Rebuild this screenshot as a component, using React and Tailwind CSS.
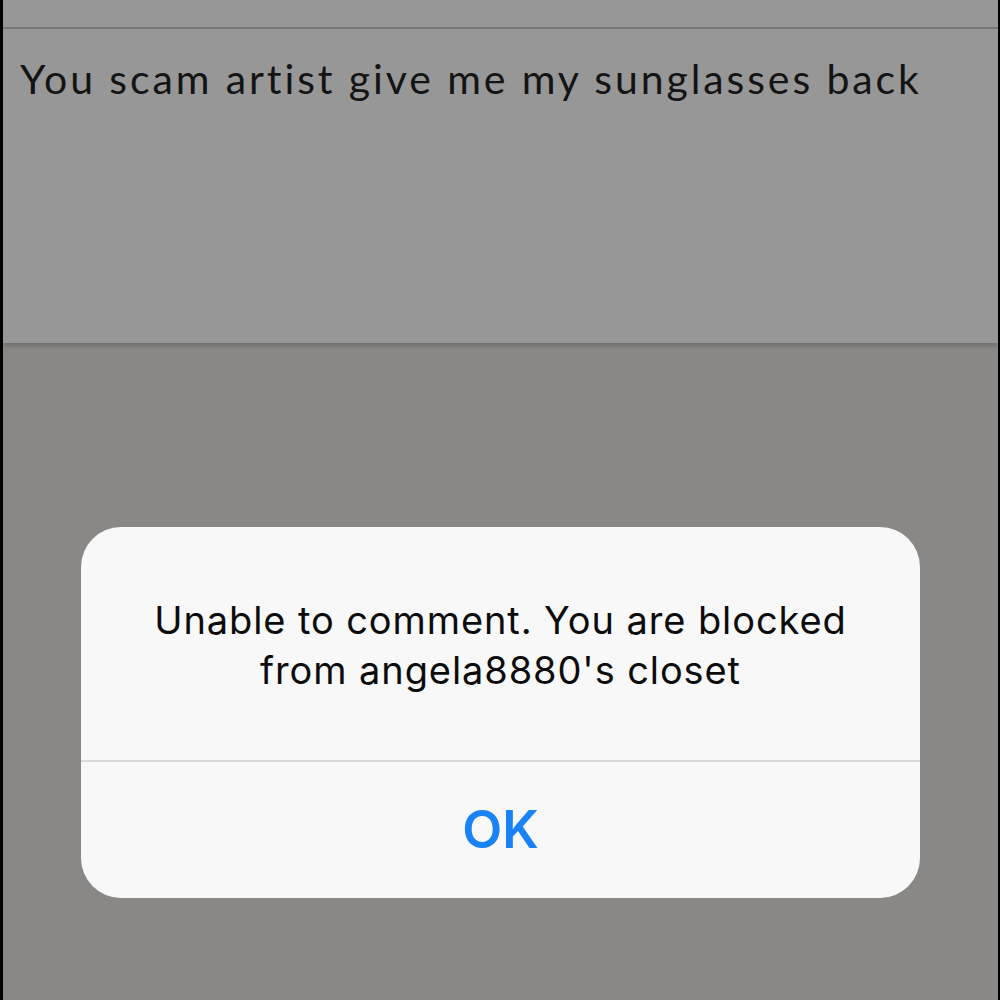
import React from 'react';

const App = () => {
  return (
    <div className="w-[1000px] h-[1000px] flex flex-col bg-[#8a8886] border-l-[3px] border-r-[2px] border-black overflow-hidden">
      {/* Comment panel */}
      <div className="h-[343px] flex flex-col bg-[#979797] shadow-[0_3px_4px_rgba(0,0,0,0.18)] relative z-10">
        <div className="h-[27px]" />
        <div className="h-[2px] bg-[#777777]" />
        <p className="pl-[17px] pt-[26px] text-[41px] leading-[48px] tracking-[2.9px] text-[#141414] font-['Lato',sans-serif]">
          You scam artist give me my sunglasses back
        </p>
      </div>

      {/* Alert */}
      <div className="flex-1 flex flex-col items-center pt-[184px]">
        <div className="w-[839px] h-[371px] bg-[#f8f8f8] rounded-[40px] flex flex-col">
          <div className="h-[233px] flex items-start justify-center pt-[68px]">
            <p className="text-center text-[38px] leading-[50px] tracking-[0.9px] text-[#0c0c0c] font-['Inter',sans-serif]">
              Unable to comment. You are blocked
              <br />
              from angela8880's closet
            </p>
          </div>
          <div className="h-[2px] bg-[#dadada]" />
          <button
            type="button"
            className="flex-1 flex items-center justify-center text-[52px] font-semibold text-[#1a82f7] font-['Inter',sans-serif]"
          >
            OK
          </button>
        </div>
      </div>
    </div>
  );
};

export default App;
